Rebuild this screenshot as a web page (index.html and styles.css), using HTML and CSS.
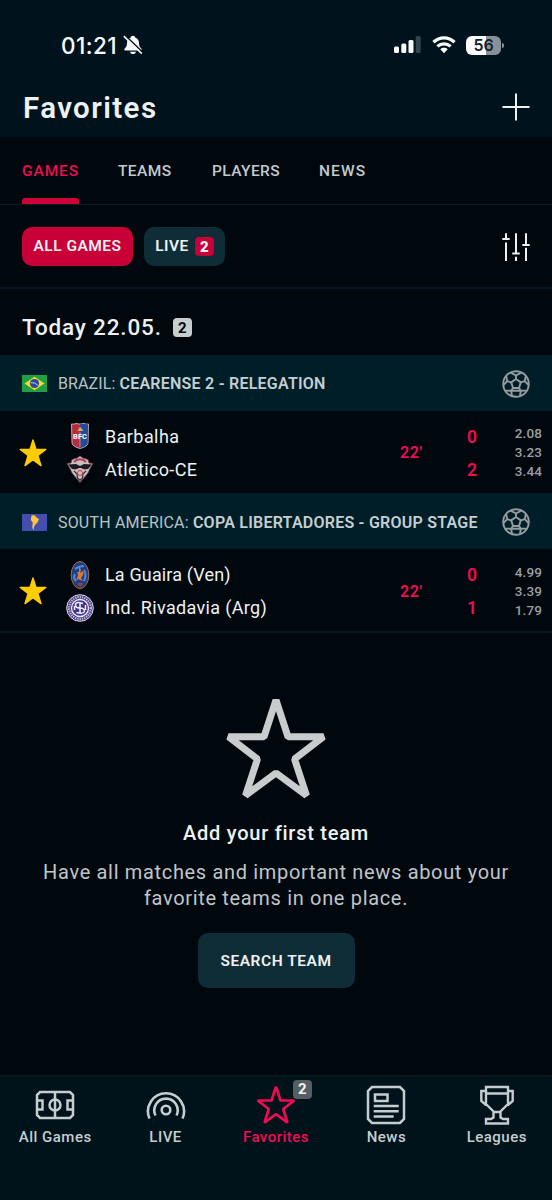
FILE: index.html
```html
<!DOCTYPE html>
<html lang="en">
<head>
<meta charset="utf-8">
<title>Favorites</title>
<link rel="stylesheet" href="styles.css">
</head>
<body>
<svg class="defs" width="0" height="0">
  <symbol id="ball" viewBox="0 0 28 28">
    <g fill="none" stroke="currentColor" stroke-width="1.900" stroke-linejoin="round">
      <circle cx="14" cy="14" r="12.800"/>
      <path d="M14 9 18.800 12.400 17 18H11L9.200 12.400ZM14 9V5.500M18.800 12.400 22.800 11.200M17 18 18.800 20.800M11 18 9.200 20.800M9.200 12.400 5.200 11.200M8.700 2.600 14 5.500 19.300 2.600M23.800 6 22.800 11.200 26.500 15M24.400 20.600 18.800 20.800 18 26M10 26 9.200 20.800 3.600 20.600M1.500 15 5.200 11.200 4.200 6M9.200 20.800H18.800"/>
    </g>
  </symbol>
  <symbol id="star" viewBox="0 0 28 28">
    <path d="M14 1 17 10.4H26.8L18.9 16.5 22 26.6 14 20.6 6 26.6 9.1 16.5 1.2 10.4H11Z" fill="#fc0" stroke="#fc0" stroke-width="1.4" stroke-linejoin="round"/>
  </symbol>
</svg>
<div class="app">
  <header class="top">
    <div class="status">
      <div class="clock"><span>01:21</span>
        <svg width="20" height="20" viewBox="0 0 20 20"><path d="M10 .8C8.6.8 8 1.7 7.8 2.4 5 3.2 4 5.6 4 8c0 3-1 4.200-2.300 5.600C1 14.500 1.200 15.500 2.300 15.500H17.700C18.800 15.500 19 14.500 18.300 13.600 17 12.200 16 11 16 8 16 5.600 15 3.200 12.200 2.400 12 1.700 11.400.8 10 .8ZM7 16.700H13C12.600 18.300 11.500 19 10 19S7.400 18.300 7 16.700Z" fill="#f4f7f9"/><path d="M2.600 .9 20 17.500" stroke="#00121c" stroke-width="1.500"/><path d="M.8 1.200 18.800 18.600" stroke="#f4f7f9" stroke-width="1.600"/></svg>
      </div>
      <div class="signals">
        <svg width="27" height="18" viewBox="0 0 27 18"><g fill="#f8fafc"><rect x="0" y="10.500" width="5" height="6.500" rx="1.500"/><rect x="7.300" y="7.500" width="5" height="9.500" rx="1.500"/><rect x="14.500" y="4" width="5" height="13" rx="1.500"/></g><rect x="21.700" y="0" width="5" height="17" rx="1.500" fill="#354550"/></svg>
        <svg width="24" height="18" viewBox="0 0 24 18"><g fill="none" stroke="#f8fafc" stroke-width="3.300"><path d="M1.500 6.300C7.500.5 16.500.5 22.500 6.300"/><path d="M5.400 10.400C9.200 6.900 14.800 6.900 18.600 10.400"/></g><path d="M8.300 13.200C10.400 11.400 13.600 11.400 15.700 13.200L12 17.200Z" fill="#f8fafc"/></svg>
        <div class="battery"><span>56</span></div>
      </div>
    </div>
    <div class="title"><h1>Favorites</h1>
      <svg width="28" height="28" viewBox="0 0 28 28"><path d="M14 .5V27.500M.5 14H27.500" stroke="#eef1f2" stroke-width="2"/></svg>
    </div>
  </header>
  <nav class="tabs"><a class="tab active">GAMES</a><a class="tab teams-tab">TEAMS</a><a class="tab players-tab">PLAYERS</a><a class="tab news-tab">NEWS</a></nav>
  <div class="filters">
    <div class="pill all">ALL GAMES</div>
    <div class="pill live">LIVE <b>2</b></div>
    <svg width="28" height="28" viewBox="0 0 28 28"><path d="M4 .2V6.800M4 9.500V28M14 .2V21M14 23.800V28M24 .2V12M24 14.800V28M.3 6H7.700M10.300 20.500H17.700M20.300 12H27.700" fill="none" stroke="#eef1f2" stroke-width="2"/></svg>
  </div>
  <div class="day"><h2>Today 22.05.</h2><b>2</b></div>

  <div class="league">
    <svg width="25" height="17" viewBox="0 0 25 17"><path fill="#229e45" d="M0 0H25V17H0Z"/><path fill="#f2dc22" d="M12.500 1.800 22.500 8.500 12.500 15.200 2.500 8.500Z"/><circle cx="12.500" cy="8.500" r="4.600" fill="#2b49a3"/><path d="M8.500 7.700Q13 7 16.300 10.500" fill="none" stroke="#d9e8e4" stroke-width=".8"/></svg>
    <p class="l1">BRAZIL: <b>CEARENSE 2 - RELEGATION</b></p><svg class="ball" width="28" height="28"><use href="#ball"/></svg>
  </div>
  <div class="match">
    <svg class="fav" width="28" height="28"><use href="#star"/></svg>
    <div class="crests">
      <svg width="28" height="28" viewBox="0 0 28 28"><path d="M5.500 2Q8 2.500 10 1.500 14 2.600 18 1.500 20 2.500 22.500 2L22 21Q21.500 24.500 14 26.500 6.500 24.500 6 21Z" fill="#b62c3f" stroke="#d6cdd6" stroke-width=".8"/><path d="M14 2.300 18 2 22 2.500 21.600 21Q21 24 14 26Z" fill="#234b9c"/><path d="M14 10V25" stroke="#d09a62" stroke-width=".9"/><path d="M11.500 9 14 4.500 17.500 9Z" fill="#d0a66a"/><text x="14" y="17" text-anchor="middle" class="bfc">BFC</text></svg>
      <svg width="28" height="28" viewBox="0 0 28 28"><path d="M14 1Q17 4 22 4.500L23 8 27 8.500 24 13.500 22 18 14 27.500 6 18 4 13.500 1 8.500 5 8 6 4.500Q11 4 14 1Z" fill="#c9bfc2" stroke="#713d48" stroke-width=".8"/><path d="M8 7Q14 1.500 20 7" fill="none" stroke="#b63648" stroke-width="2"/><path d="M2 9.500 10 9 14 11 18 9 26 9.500 22 14 18.500 14.500 15 13H13L9.500 14.500 6 14Z" fill="#1c1c21"/><path d="M8 16 11 19 11.500 23 14 25.500 16.500 23 17 19 20 16" fill="none" stroke="#3a2a30" stroke-width="1.200"/><circle cx="14" cy="18" r="2.500" fill="#e2b7bd" stroke="#b63648"/></svg>
    </div>
    <div class="teams"><span class="t1">Barbalha</span><span class="t2">Atletico-CE</span></div>
    <div class="minute">22'</div><div class="score"><span>0</span><span>2</span></div>
    <div class="odds"><span>2.08</span><span>3.23</span><span>3.44</span></div>
  </div>

  <div class="league second">
    <svg width="25" height="17" viewBox="0 0 25 17"><path fill="#444eaf" d="M0 0H25V17H0Z"/><path fill="#ffc63d" d="M9.500 1.500 12.500 1.300 14 3 17 5.200 15.500 8.500 13.300 10.500 12 13 11.500 16 10.300 14 10.700 8.500 8.800 6Z"/></svg>
    <p class="l2">SOUTH AMERICA: <b>COPA LIBERTADORES - GROUP STAGE</b></p><svg class="ball" width="28" height="28"><use href="#ball"/></svg>
  </div>
  <div class="match last">
    <svg class="fav" width="28" height="28"><use href="#star"/></svg>
    <div class="crests">
      <svg width="28" height="28" viewBox="0 0 28 28"><ellipse cx="14" cy="14" rx="8.800" ry="13.500" fill="#263d78" stroke="#a66b48"/><ellipse cx="14" cy="14" rx="6.700" ry="11" fill="#203a8e"/><path d="M9 8Q13 5 18 5M9 13Q7 17 10 20M18 9Q21 14 18 20" fill="none" stroke="#448bd0" stroke-width="2.200"/><path d="M13 5 15 9 14 12 17 10 17.500 13 15 17 17 20 12 18 10 20 12 14 11 11 13 11Z" fill="#d47e32"/><path d="M11 22H17L15.500 25H12.500Z" fill="#8c4824"/></svg>
      <svg width="28" height="28" viewBox="0 0 28 28"><circle cx="14" cy="14" r="13.300" fill="#443487" stroke="#e5e0ef" stroke-width="1"/><circle cx="14" cy="14" r="10.900" fill="none" stroke="#b9b0d5" stroke-width="2.200" stroke-dasharray="1.500 .8"/><circle cx="14" cy="14" r="8.500" fill="#443487" stroke="#f1edf6" stroke-width="1.300"/><path d="M17 9.500Q9 7 9.500 11.500 10 14 14 14T18.500 17Q18 20.500 10.500 18.500M14 8V19.500M8.500 12V16M19.500 11V16" fill="none" stroke="#efebf5" stroke-width="1.500"/></svg>
    </div>
    <div class="teams"><span class="t3">La Guaira (Ven)</span><span class="t4">Ind. Rivadavia (Arg)</span></div>
    <div class="minute">22'</div><div class="score"><span>0</span><span>1</span></div>
    <div class="odds"><span>4.99</span><span>3.39</span><span>1.79</span></div>
  </div>

  <main class="empty">
    <svg width="100" height="100" viewBox="226 699 100 100"><path d="M276 700 288 736.800H323.500L294.500 759 306.500 795.500 276 773 245.500 795.500 257.500 759 228.500 736.800H264Z" fill="none" stroke="#c9cccd" stroke-width="7" stroke-linejoin="bevel"/></svg>
    <h3>Add your first team</h3>
    <p>Have all matches and important news about your<br>favorite teams in one place.</p>
    <button>SEARCH TEAM</button>
  </main>

  <nav class="bottom">
    <a><svg width="40" height="40" viewBox="0 0 40 40"><g fill="none" stroke="currentColor" stroke-width="2.500"><path d="M5 7H35L38 10V30L35 33H5L2 30V10ZM20 7V33M2 15.500H7.500V24.500H2M38 15.500H32.500V24.500H38"/><circle cx="20" cy="20" r="5.500"/></g></svg><span>All Games</span></a>
    <a><svg width="40" height="40" viewBox="0 0 40 40"><g fill="none" stroke="currentColor" stroke-width="2.600"><circle cx="20" cy="25" r="4.300"/><path d="M9.500 30.500A11.700 11.700 0 1 1 30.500 30.500M3.500 33.500A18 18 0 1 1 36.500 33.500"/></g></svg><span>LIVE</span></a>
    <a class="on"><svg width="40" height="40" viewBox="0 0 40 40"><path d="M20 1.600 24.500 15.500H38.300L27.200 24 31.500 37.600 20 29.200 8.500 37.600 12.800 24 1.700 15.500H15.500Z" fill="none" stroke="currentColor" stroke-width="2.700" stroke-linejoin="bevel"/></svg><span>Favorites</span><b>2</b></a>
    <a><svg width="40" height="40" viewBox="0 0 40 40"><g fill="none" stroke="currentColor" stroke-width="2.500"><path d="M6 2H34L38 6V34L34 38H6L2 34V6Z"/><path d="M9 9.500H21.500V16H9ZM7.700 21H32.700M7.700 26.300H32.700M7.700 31.600H27.700"/></g></svg><span>News</span></a>
    <a><svg width="40" height="40" viewBox="0 0 40 40"><path d="M9 2H31V19L23.500 26.500V32.500L26 34H31V38.500H9V34H14L16.500 32.500V26.500L9 19ZM9 8.500H31M9 6H4.300V16L9 20M31 6H35.700V16L31 20M16 27H24" fill="none" stroke="currentColor" stroke-width="2.400"/></svg><span>Leagues</span></a>
  </nav>
</div>
</body>
</html>
```
FILE: styles.css
```css
* { box-sizing: border-box; }
body, h1, h2, h3, p { margin: 0; }
body { background: #00080e; color: #eef1f2; font-family: Roboto, "Liberation Sans", sans-serif; }
svg { display: block; flex: none; }
.defs { position: absolute; }
.app { width: 552px; height: 1200px; display: flex; flex-direction: column; overflow: hidden; white-space: nowrap; }

.top { height: 137px; background: #00121c; flex: none; }
.status { height: 78px; padding: 12px 49px 0 61px; display: flex; justify-content: space-between; align-items: center; }
.clock { display: flex; align-items: center; gap: 6px; font: 500 22.5px Inter, sans-serif; letter-spacing: .4px; color: #f8fafc; }
.signals { display: flex; align-items: center; gap: 10px; }
.signals svg:first-child { margin-right: 1px; }
.battery { position: relative; width: 35px; height: 19px; border-radius: 6px; background: linear-gradient(90deg, #f8fafc 56%, #87919a 56%); color: #13212b; font: 600 16px/19px Inter, sans-serif; text-align: center; margin-right: 2px; letter-spacing: -.2px; }
.battery::after { content: ""; position: absolute; right: -3px; top: 7px; width: 2px; height: 5px; border-radius: 0 2px 2px 0; background: #87919a; }
.title { height: 59px; padding: 0 22px 0 23px; display: flex; align-items: center; justify-content: space-between; }
.title h1 { padding-top: 1px; font-size: 29.5px; font-weight: 600; letter-spacing: 1.4px; line-height: 59px; }
.title svg { margin-bottom: 1px; }

.tabs { height: 68px; flex: none; padding-left: 22px; display: grid; grid-template-columns: 96px 94px 107px 60px; border-bottom: 1px solid #061c25; }
.tab { height: 67px; line-height: 68px; font-size: 15.5px; font-weight: 500; letter-spacing: .9px; color: #c5c9cc; }
.tab.active { position: relative; color: #f00c53; }
.tab.active::after { content: ""; position: absolute; left: 0; bottom: 0; width: 57px; height: 6px; border-radius: 3px 3px 0 0; background: #cd0039; }
.teams-tab, .players-tab { letter-spacing: .4px; }
.news-tab { letter-spacing: 1.1px; }

.filters { height: 84px; flex: none; padding: 0 22px; display: flex; align-items: center; border-bottom: 2px solid #02141e; }
.filters svg { margin: 1px 0 0 auto; }
.pill { height: 39px; border-radius: 10px; display: flex; align-items: center; justify-content: center; font-size: 15.5px; font-weight: 600; letter-spacing: .5px; }
.pill.all { width: 111px; background: #c80037; }
.pill.live { width: 81px; margin-left: 11px; background: #0f2d37; gap: 6px; }
.pill b { width: 19px; height: 19px; border-radius: 4px; background: #c80037; font-size: 15px; line-height: 20px; text-align: center; letter-spacing: 0; }

.day { height: 66px; flex: none; padding: 10px 22px 0; display: flex; align-items: center; gap: 11px; }
.day h2 { font-size: 22.500px; font-weight: 500; letter-spacing: .82px; }
.day b { width: 19px; height: 19px; border-radius: 4px; background: #c8cdd0; color: #00080e; font-size: 15px; line-height: 20px; text-align: center; }

.league { height: 56px; flex: none; padding: 1px 22px 0; display: flex; align-items: center; background: #001e28; }
.league p { margin-left: 11px; font-size: 16px; font-weight: 400; color: #b9c3c7; letter-spacing: .1px; }
.league p.l2 { letter-spacing: .18px; }
.league p b { font-weight: 600; color: #c5cfd3; letter-spacing: .24px; }
.league .ball { margin-left: auto; color: #969b9f; }
.second { padding-top: 2px; }

.match { height: 82px; flex: none; padding: 1px 10px 0 19px; display: flex; align-items: center; }
.match.last { height: 84px; padding-top: 2px; border-bottom: 2px solid #04151d; }
.crests { margin-left: 19px; display: grid; gap: 5px; }
.teams { margin-left: 11px; width: 280px; display: grid; }
.teams span { font-size: 18px; line-height: 33px; letter-spacing: .42px; }
.teams .t2 { letter-spacing: .37px; }
.teams .t3 { letter-spacing: .15px; }
.teams .t4 { letter-spacing: .33px; }
.minute { width: 40px; margin-left: 15px; color: #f00c53; font-size: 16px; font-weight: 600; letter-spacing: .6px; }
.score { width: 20px; margin-left: 22px; display: grid; text-align: center; color: #f00c53; }
.score span { padding-top: 1px; height: 33px; font-size: 17.5px; line-height: 33px; font-weight: 600; }
.odds { margin-left: auto; display: grid; text-align: right; color: #9a9fa2; }
.odds span { font-size: 13.5px; line-height: 19px; letter-spacing: .1px; font-weight: 500; }
.bfc { font: 700 7.5px Roboto, sans-serif; fill: #fff; }

.empty { flex: 1; padding-top: 66px; display: flex; flex-direction: column; align-items: center; text-align: center; }
.empty h3 { margin-top: 21px; font-size: 20px; line-height: 26px; font-weight: 500; letter-spacing: .75px; }
.empty p { margin-top: 13px; font-size: 20px; line-height: 26px; color: #c0c5c8; letter-spacing: .67px; font-weight: 400; }
button { margin-top: 22px; width: 157px; height: 55px; border: 0; border-radius: 10px; background: #0f2d37; color: #eef1f2; font: 600 15.5px Roboto, sans-serif; letter-spacing: .55px; }

.bottom { height: 125px; flex: none; display: grid; grid-template-columns: repeat(5, 1fr); background: #00121a; border-top: 2px solid #031a20; padding-top: 8px; }
.bottom a { position: relative; display: flex; flex-direction: column; align-items: center; color: #c5cdd0; }
.bottom span { margin-top: 3px; font-size: 15px; line-height: 18px; font-weight: 500; letter-spacing: .5px; }
.bottom .on { color: #f00c53; }
.bottom b { position: absolute; left: 72px; top: -5px; width: 19px; height: 19px; border-radius: 4px; background: #555e63; color: #eef1f2; font-size: 15px; line-height: 19px; text-align: center; }
```
